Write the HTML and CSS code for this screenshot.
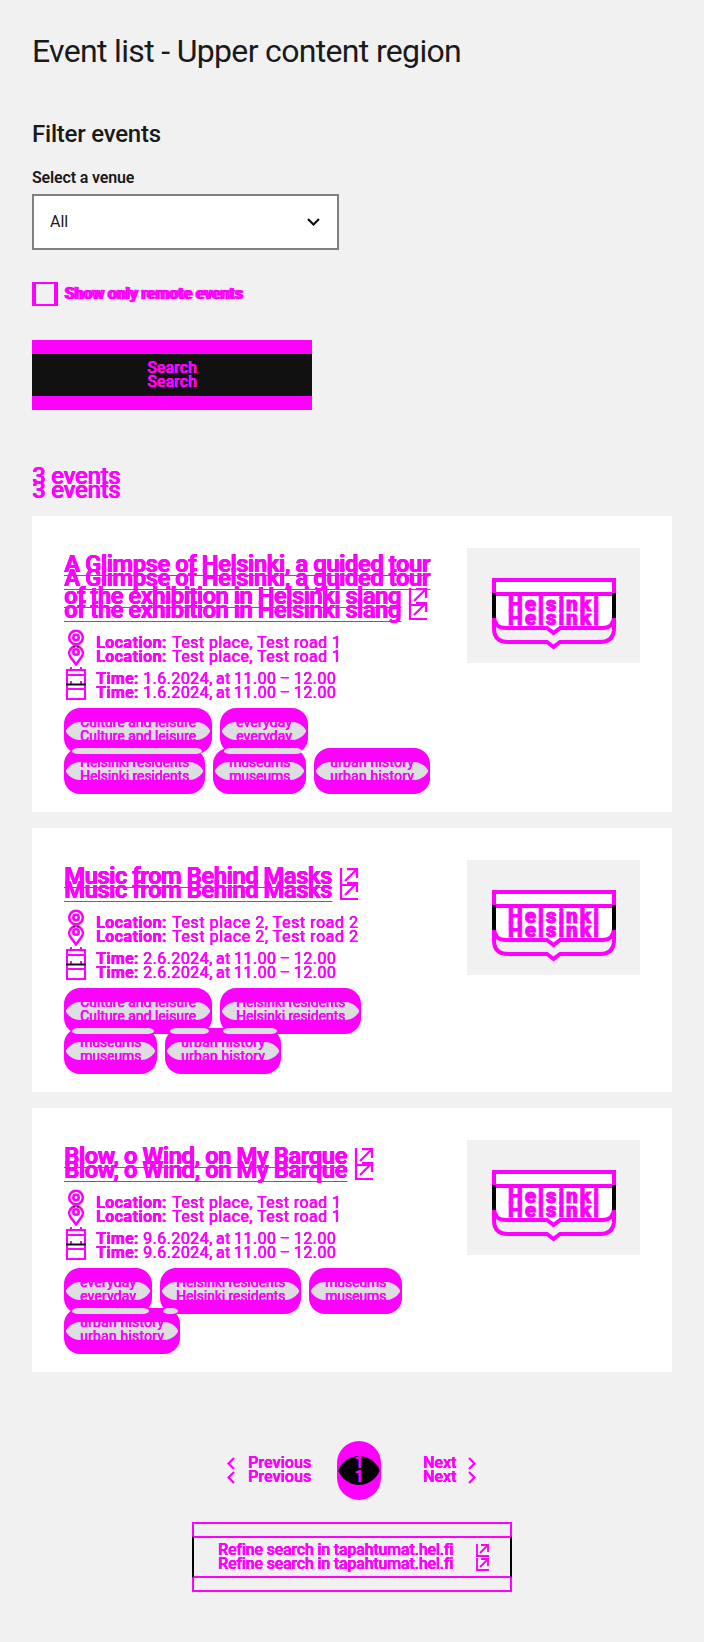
FILE: index.html
```
<!DOCTYPE html>
<html lang="en">
<head>
<meta charset="utf-8">
<title>Event list</title>
<link rel="stylesheet" href="styles.css">
</head>
<body>
<svg class="defs" aria-hidden="true">
  <defs>
    <symbol id="link" viewBox="0 0 18 32" overflow="visible">
      <g fill="none" stroke="#f0f" stroke-width="2.2">
        <path d="M1 0V17H18M5 13 16 2M7 1.2H17V10"/>
        <path d="M1 14V31H18M5 27 16 16M7 15.2H17V24"/>
      </g>
    </symbol>
    <symbol id="pin" viewBox="0 0 24 38">
      <g fill="none" stroke="#f0f" stroke-width="2.6">
        <circle cx="12" cy="9.5" r="6.8"/><circle cx="12" cy="9.5" r="2.7"/>
        <path d="M12 36.5 6.5 29A6.8 6.8 0 1 1 17.5 29Z"/><circle cx="12" cy="24" r="2.7"/>
      </g>
      <path d="M9 18.5H15" stroke="#111" stroke-width="1.6" stroke-dasharray="2"/>
    </symbol>
    <symbol id="cal" viewBox="0 0 24 38">
      <g fill="none" stroke="#f0f" stroke-width="2">
        <path d="M3 21V6H21V35H3V21M3 11H21M3 25H21M7 3V6M17 3V6M7 17V20M17 17V20"/>
      </g>
      <path d="M2 20.5H22" stroke="#111" stroke-width="2"/>
    </symbol>
    <symbol id="logo" viewBox="467 548 173 115">
      <path d="M494 580H614V616Q614 628 602 628H560L553.5 633 547 628H506Q494 628 494 616Z" fill="#fff" stroke="#f0f" stroke-width="4"/>
      <path d="M494 594H614V628Q614 642 600 642H560L553.5 647 547 642H508Q494 642 494 628Z" fill="none" stroke="#f0f" stroke-width="4"/>
      <path d="M494 593V618M614 593V618" stroke="#000" stroke-width="4"/>
      <g fill="#f0f" stroke="#f0f" stroke-width=".8" font-family="Roboto, sans-serif" font-weight="900" font-size="21">
        <text x="508" y="611" textLength="91">Helsinki</text>
        <text x="508" y="625" textLength="91">Helsinki</text>
      </g>
    </symbol>
  </defs>
</svg>

<main class="page">
  <h1 class="title">Event list - Upper content region</h1>

  <form class="filter">
    <h2 class="filter-title">Filter events</h2>
    <label class="label">Select a venue</label>
    <div class="select">All
      <svg class="select-arrow" viewBox="0 0 13 8"><path d="M1 1 6.5 6.5 12 1" fill="none" stroke="#111" stroke-width="2.2"/></svg>
    </div>
    <div class="check"><span class="box"></span><span class="check-text">Show only remote events</span></div>
    <div class="search"><span class="search-core">Search</span></div>
  </form>

  <h2 class="count double">3 events</h2>

  <section class="cards">
    <article class="card">
      <div class="info">
        <h3 class="name"><span class="double glimpse">A Glimpse of Helsinki, a guided tour</span><br><span class="double exhibition">of the exhibition in Helsinki slang</span><svg class="ext"><use href="#link" width="18" height="32"/></svg></h3>
        <div class="row"><svg class="icon"><use href="#pin"/></svg><b class="double loc">Location:</b><span class="double place">Test place, Test road 1</span></div>
        <div class="row"><svg class="icon"><use href="#cal"/></svg><b class="double time">Time:</b><span class="double date">1.6.2024, at 11.00 – 12.00</span></div>
        <div class="tags">
          <span class="tag culture">Culture and leisure</span><span class="tag everyday">everyday</span>
          <span class="tag residents">Helsinki residents</span><span class="tag museums">museums</span><span class="tag urban">urban history</span>
          <i class="seam a1"></i><i class="seam a2"></i>
        </div>
      </div>
      <svg class="logo"><use href="#logo"/></svg>
    </article>

    <article class="card">
      <div class="info">
        <h3 class="name"><span class="double music">Music from Behind Masks</span><svg class="ext"><use href="#link" width="18" height="32"/></svg></h3>
        <div class="row"><svg class="icon"><use href="#pin"/></svg><b class="double loc">Location:</b><span class="double place2">Test place 2, Test road 2</span></div>
        <div class="row"><svg class="icon"><use href="#cal"/></svg><b class="double time">Time:</b><span class="double date">2.6.2024, at 11.00 – 12.00</span></div>
        <div class="tags">
          <span class="tag culture">Culture and leisure</span><span class="tag residents">Helsinki residents</span>
          <span class="tag museums">museums</span><span class="tag urban">urban history</span>
          <i class="seam b1"></i><i class="seam b2"></i><i class="seam b3"></i>
        </div>
      </div>
      <svg class="logo"><use href="#logo"/></svg>
    </article>

    <article class="card">
      <div class="info">
        <h3 class="name"><span class="double blow">Blow, o Wind, on My Barque</span><svg class="ext"><use href="#link" width="18" height="32"/></svg></h3>
        <div class="row"><svg class="icon"><use href="#pin"/></svg><b class="double loc">Location:</b><span class="double place">Test place, Test road 1</span></div>
        <div class="row"><svg class="icon"><use href="#cal"/></svg><b class="double time">Time:</b><span class="double date">9.6.2024, at 11.00 – 12.00</span></div>
        <div class="tags">
          <span class="tag everyday">everyday</span><span class="tag residents">Helsinki residents</span><span class="tag museums">museums</span>
          <span class="tag urban">urban history</span>
          <i class="seam c1"></i><i class="seam c2"></i>
        </div>
      </div>
      <svg class="logo"><use href="#logo"/></svg>
    </article>
  </section>

  <nav class="pager">
    <svg class="chev" viewBox="0 0 8 27"><path d="M7 1 1.5 6.5 7 12M7 15 1.5 20.5 7 26" fill="none" stroke="#f0f" stroke-width="2.2"/></svg>
    <span class="double prev">Previous</span>
    <span class="current"><span class="double">1</span></span>
    <span class="double next">Next</span>
    <svg class="chev" viewBox="0 0 8 27"><path d="M1 1 6.5 6.5 1 12M1 15 6.5 20.5 1 26" fill="none" stroke="#f0f" stroke-width="2.2"/></svg>
  </nav>

  <div class="refine">
    <span class="double refine-text">Refine search in tapahtumat.hel.fi</span>
    <svg class="refine-icon" viewBox="0 0 14 28"><path d="M1 0V12H13M4 9 12 1M5 1H12V8M1 14V26H13M4 23 12 15M5 15H12V22" fill="none" stroke="#f0f" stroke-width="1.9"/></svg>
  </div>
</main>
</body>
</html>
```
FILE: styles.css
```
* { box-sizing: border-box; }

body {
  margin: 0;
  background: #f1f1f1;
  color: #1a1a1a;
  font: 400 16px/24px Roboto, "Liberation Sans", sans-serif;
}

.defs { position: absolute; width: 0; height: 0; }

.page { height: 1642px; padding: 31px 32px 0; }

h1, h2, h3 { margin: 0; }

.double { white-space: nowrap; }
.double, .tag, .search-core {
  color: #f0f;
  text-shadow: 0 0 0 #f0f, 0.4px 0 0 #f0f, 0 14px 0 #f0f, 0 14px 0 #f0f, 0.4px 14px 0 #f0f;
}

.title { font-size: 32px; font-weight: 400; line-height: 40px; letter-spacing: -0.67px; }

.filter { display: flex; flex-direction: column; align-items: flex-start; margin-top: 48px; }
.filter-title { font-size: 24px; font-weight: 500; line-height: 30px; letter-spacing: -0.22px; }
.label { margin-top: 17px; font-weight: 600; letter-spacing: -0.15px; }
.select {
  display: flex; align-items: center; justify-content: space-between;
  width: 307px; height: 56px; margin-top: 4px; padding: 0 17px 0 16px;
  background: #fff; border: 2px solid #808080;
}
.select-arrow { width: 13px; height: 8px; }

.check { display: flex; gap: 6px; margin-top: 32px; }
.box { width: 26px; height: 24px; border: solid #f0f; border-width: 2px 4px; }
.check-text { color: #f0f; font-weight: 600; letter-spacing: -0.1px; text-shadow: 2px 0 0 #f0f; -webkit-text-stroke: 0.4px #f0f; }

.search {
  width: 280px; height: 70px; margin-top: 34px; padding: 14px 0;
  background: #f0f;
}
.search-core {
  display: block; height: 42px; line-height: 28px; background: #111;
  text-align: center; font-weight: 500;
}

.count { margin-top: 51px; font-size: 24px; font-weight: 500; line-height: 30px; letter-spacing: -0.3px; }

.cards { display: flex; flex-direction: column; gap: 16px; margin-top: 25px; }
.card { display: flex; justify-content: space-between; align-items: flex-start; padding: 32px; background: #fff; }
.info { width: 380px; }
.logo { width: 173px; height: 115px; background: #f1f1f1; }

.name { margin-bottom: 16px; font-size: 24px; font-weight: 700; line-height: 32px; white-space: nowrap; }
.name .double { text-decoration: underline; text-decoration-thickness: 1px; text-underline-offset: 3px; text-decoration-skip-ink: none; }
.glimpse { letter-spacing: -0.56px; }
.exhibition { letter-spacing: -0.63px; }
.music { letter-spacing: -0.59px; }
.blow { letter-spacing: -0.57px; }
.ext { width: 18px; height: 18px; margin-left: 8px; overflow: visible; vertical-align: -2px; }

.row { display: flex; height: 24px; line-height: 29px; margin-bottom: 12px; }
.icon { width: 24px; height: 38px; margin-right: 8px; }
.loc { width: 76px; letter-spacing: 0.45px; }
.place { letter-spacing: 0.41px; }
.place2 { letter-spacing: 0.55px; }
.time { width: 47px; letter-spacing: 0.3px; }
.date { letter-spacing: 0.45px; word-spacing: -1.2px; }

.tags { position: relative; display: flex; flex-wrap: wrap; gap: 8px; margin-top: 20px; }
.tag {
  height: 46px; margin-bottom: -14px; padding-left: 16px;
  border-radius: 16px; font-size: 14px; line-height: 29px; white-space: nowrap;
  position: relative; isolation: isolate; background: #f0f;
}
/* intersection of two pills offset by 14px */
.tag::before {
  content: ""; position: absolute; z-index: -1; inset: 0 0 auto; height: 32px;
  border-radius: 16px; background: #dcdee0;
  clip-path: inset(14px 0 -14px round 16px);
}
.culture { width: 148px; }
.residents { width: 141px; letter-spacing: -0.09px; }
.everyday { width: 88px; letter-spacing: 0.14px; }
.museums { width: 93px; letter-spacing: -0.1px; }
.urban { width: 116px; letter-spacing: 0.2px; }

/* slivers where the two tag rows overlap */
.seam { position: absolute; top: 40px; height: 6px; border-radius: 8px / 4px; background: #dcdee0; }
.a1 { left: 8px; width: 130px; }
.a2 { left: 160px; width: 78px; }
.b1 { left: 8px; width: 82px; }
.b2 { left: 106px; width: 39px; }
.b3 { left: 159px; width: 54px; }
.c1 { left: 8px; width: 77px; }
.c2 { left: 99px; width: 15px; }

.pager {
  display: flex; height: 44px; margin: 69px 0 0 195px;
  font-weight: 500; line-height: 44px;
}
.chev { width: 8px; height: 27px; margin-top: 16px; }
.prev { margin-left: 13px; width: 63px; letter-spacing: 0.1px; }
.current {
  position: relative; isolation: isolate; width: 44px; height: 59px; margin-left: 26px;
  border-radius: 22px; background: #f0f; text-align: center;
}
.current::before {
  content: ""; position: absolute; z-index: -1; inset: 0 0 auto; height: 44px;
  border-radius: 22px; background: #000;
  clip-path: inset(15px 0 -15px round 22px);
}
.next { margin-left: 42px; width: 33px; }
.next + .chev { margin-left: 12px; }

.refine {
  position: relative; display: flex; width: 320px; height: 70px;
  margin: 37px 0 0 160px; padding-left: 24px; border: 2px solid #f0f;
  font-weight: 500; line-height: 51px;
}
.refine::before {
  content: ""; position: absolute; inset: 12px -2px;
  border: solid; border-width: 2px; border-color: #f0f #000;
}
.refine-text { width: 258px; letter-spacing: -0.19px; }
.refine-icon { width: 14px; height: 28px; margin-top: 20px; }
```
